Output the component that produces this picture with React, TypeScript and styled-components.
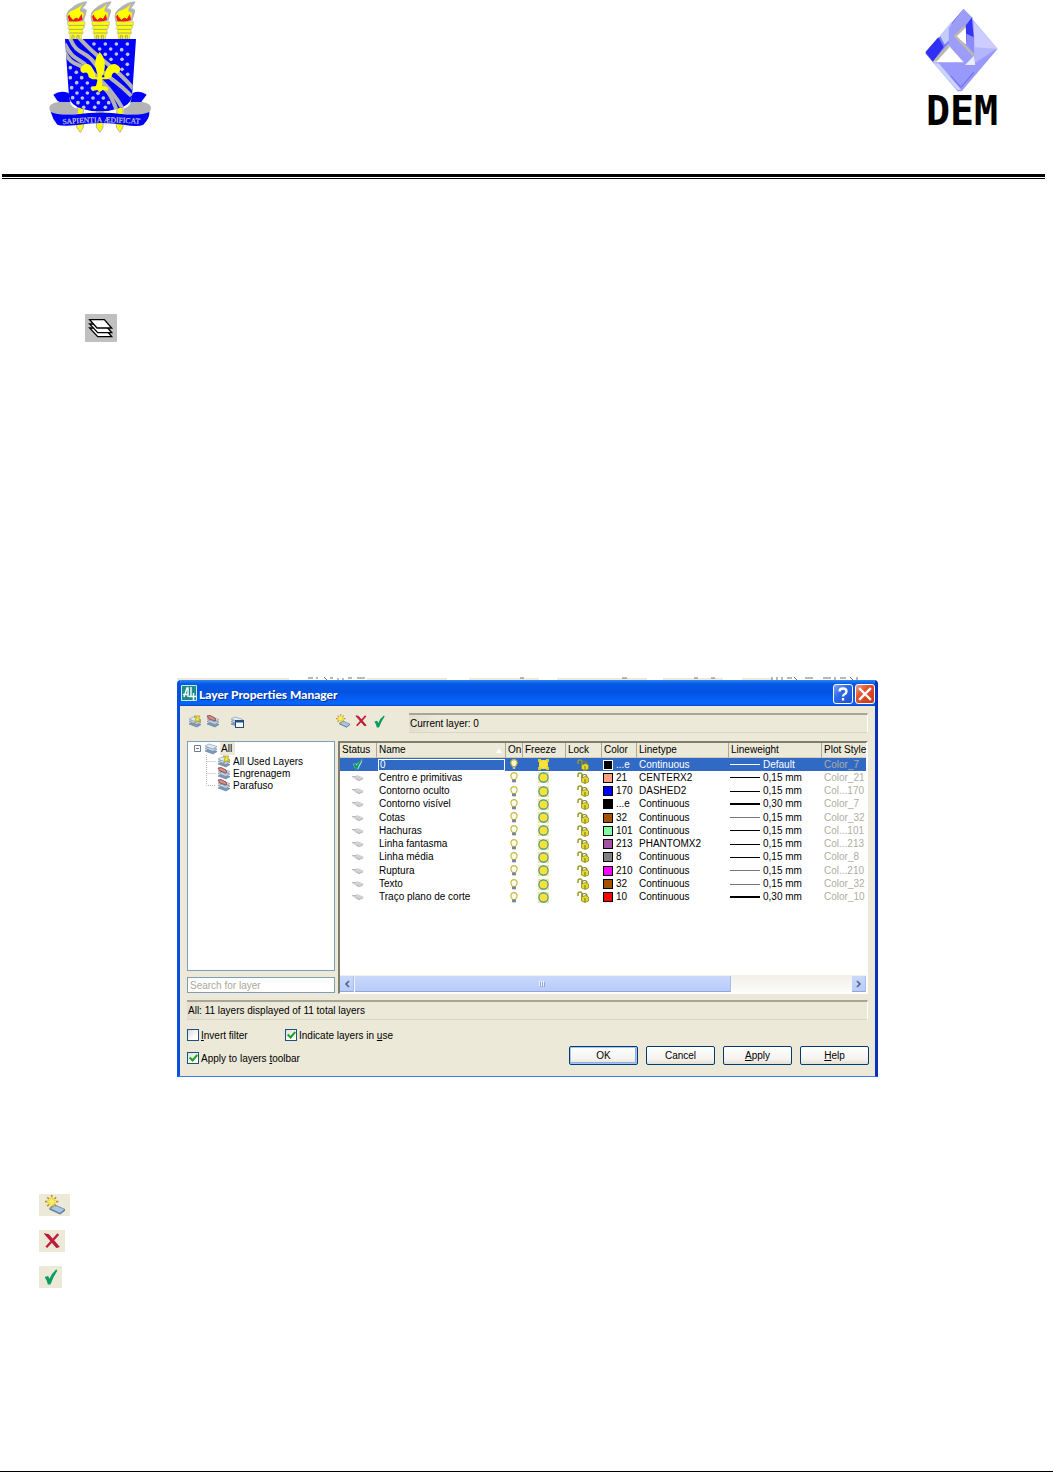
import React from "react";
import styled, { createGlobalStyle, css } from "styled-components";

const face = "#ece9d8";
const sans = '"Liberation Sans", Arial, sans-serif';

const Global = createGlobalStyle`
  *, *::before, *::after { box-sizing: border-box; }
  body { margin: 0; background: #fff; font-family: ${sans}; font-size: 10px; color: #000; }
  button, input { font-family: inherit; font-size: inherit; color: inherit; margin: 0; }
  svg { display: block; flex: none; }
`;

/* ---------- page ---------- */
const Page = styled.div`
  min-height: 100vh;
  display: flex;
  flex-direction: column;
`;
const Header = styled.header`
  height: 174px;
  padding: 0 54px 0 48px;
  display: flex;
  justify-content: space-between;
  align-items: flex-start;
`;
const Rule = styled.hr`
  width: auto;
  height: 5px;
  margin: 0 8px 0 2px;
  border: 0;
  border-top: 3px solid #000;
  border-bottom: 1px solid #000;
`;
const Department = styled.div`
  padding-top: 8px;
  display: flex;
  flex-direction: column;
  align-items: center;
`;
const DepartmentName = styled.div`
  font: bold 40px/38px "DejaVu Sans Mono", monospace;
`;
const ToolFigure = styled.div`
  margin: 135px 0 0 85px;
  width: 32px;
  height: 28px;
  background: #c0c0c0;
`;
const Figure = styled.div`
  margin: 335px auto 0;
  padding-left: 2px;
  width: 703px;
  max-width: 100%;
`;
const Legend = styled.ul`
  list-style: none;
  margin: 117px 0 0 39px;
  padding: 0;
  display: flex;
  flex-direction: column;
  gap: 14px;
  align-items: flex-start;
`;
const LegendItem = styled.li<{ $w: number }>`
  width: ${(p) => p.$w}px;
  height: 22px;
  background: ${face};
  display: flex;
  align-items: center;
  justify-content: center;
`;
const Footer = styled.footer`
  margin-top: auto;
  border-top: 1px solid #000;
`;

/* ---------- dialog ---------- */
const Dialog = styled.section`
  background: ${face};
  border: 3px solid #0a50e0;
  border-right-color: #0831c0;
  border-top: 0;
  border-bottom: 1px solid #3f7be0;
  border-radius: 4px 4px 0 0;
  overflow: hidden;
`;
const TitleBar = styled.div`
  height: 26px;
  margin: 0 -3px;
  padding: 0 3px 0 4px;
  display: flex;
  align-items: center;
  gap: 2px;
  background: linear-gradient(#2a86f5 0, #0458e6 4px, #0353e0 12px, #0562fb 21px, #0465fb 24px, #0345c8 26px);
`;
const Title = styled.h1`
  flex: 1;
  margin: 0;
  padding-top: 3px;
  font: 900 12px/16px Lato, "Open Sans", sans-serif;
  color: #fff;
  text-shadow: 1px 1px 0 #0a2f8c;
`;
const CaptionButton = styled.button<{ $close?: boolean }>`
  width: 20px;
  height: 20px;
  padding: 0;
  margin-top: 2px;
  border: 1px solid #fff;
  border-radius: 3px;
  background: ${(p) =>
    p.$close
      ? "linear-gradient(135deg, #f0a080, #e2512c 40%, #c63a14)"
      : "linear-gradient(135deg, #7ea6f5, #2f6ae8 40%, #1c50cf)"};
`;
const Toolbar = styled.div`
  padding: 7px 7px 8px;
  display: flex;
`;
const ToolGroup = styled.div<{ $w: number }>`
  width: ${(p) => p.$w}px;
  height: 16px;
  display: flex;
  gap: 2px;
`;
const ToolButton = styled.button<{ $gap?: boolean }>`
  width: 16px;
  height: 16px;
  padding: 0;
  border: 0;
  background: none;
  display: flex;
  align-items: center;
  justify-content: center;
  ${(p) => p.$gap && css`margin-left: 6px;`}
`;
const well = css`
  height: 20px;
  border: 0 solid #c9c6b6;
  border-top: 2px solid #a8a594;
  border-right: 1px solid #fff;
  border-bottom: 1px solid #d8d5c5;
  background: linear-gradient(90deg, #e2dfd0, ${face} 30px);
  padding-left: 1px;
  line-height: 18px;
  white-space: nowrap;
`;
const CurrentLayer = styled.div`
  flex: 1;
  ${well}
`;
const StatusBar = styled.div`
  ${well}
  margin: 6px 7px 0;
`;
const Panes = styled.div`
  padding: 0 7px;
  height: 253px;
  display: flex;
  gap: 3px;
`;
const Side = styled.div`
  width: 148px;
  display: flex;
  flex-direction: column;
  gap: 6px;
  padding-bottom: 1px;
`;
const Tree = styled.ul`
  flex: 1;
  margin: 0;
  padding: 0 0 0 6px;
  list-style: none;
  background: #fff;
  border: 1px solid #7f9db9;
`;
const TreeItem = styled.li<{ $child?: boolean }>`
  height: ${(p) => (p.$child ? 12 : 13)}px;
  display: flex;
  align-items: center;
  gap: ${(p) => (p.$child ? 1 : 2)}px;
  line-height: 13px;
  padding-left: ${(p) => (p.$child ? 4 : 0)}px;
`;
const TreeLabel = styled.span<{ $selected?: boolean }>`
  padding: 0 1px;
  ${(p) => p.$selected && css`background: ${face}; height: 13px; padding-right: 3px;`}
`;
const Search = styled.input`
  height: 16px;
  width: 100%;
  padding: 0 2px;
  border: 1px solid #7f9db9;
  background: #fff;
  &::placeholder { color: #aca899; opacity: 1; }
`;
const Grid = styled.div`
  flex: 1;
  min-width: 0;
  display: flex;
  flex-direction: column;
  justify-content: space-between;
  background: #fff;
  border: 2px solid #fff;
  border-left-color: #807d70;
  border-top-color: #807d70;
  border-bottom-width: 1px;
`;
const Table = styled.table`
  width: 100%;
  height: 161px;
  table-layout: fixed;
  border-collapse: separate;
  border-spacing: 0;
`;
const Th = styled.th`
  height: 15px;
  padding: 0 0 0 2px;
  font-weight: normal;
  text-align: left;
  line-height: 14px;
  white-space: nowrap;
  background: ${face};
  border-right: 1px solid #aca899;
  border-bottom: 1px solid #d0cdbd;
  &:last-child { border-right: 0; }
`;
const SortHeading = styled.div`
  display: flex;
  align-items: center;
  justify-content: space-between;
  padding-right: 3px;
`;
const Row = styled.tr<{ $selected?: boolean }>`
  ${(p) => p.$selected && css`background: #316ac5; color: #fff;`}
`;
const Td = styled.td<{ $muted?: boolean; $graphic?: boolean }>`
  padding: 0 0 0 ${(p) => (p.$graphic ? 1 : 2)}px;
  line-height: 12px;
  white-space: nowrap;
  ${(p) => p.$muted && css`color: #b0ac9f;`}
`;
const Cell = styled.div<{ $center?: boolean }>`
  display: flex;
  align-items: center;
  gap: 3px;
  justify-content: ${(p) => (p.$center ? "center" : "flex-start")};
  padding-right: ${(p) => (p.$center ? 3 : 0)}px;
`;
const NameInput = styled.input`
  display: block;
  width: 127px;
  height: 12px;
  margin-left: -1px;
  padding: 0 1px;
  border: 1px solid #fff;
  background: #316ac5;
`;
const Swatch = styled.span<{ $color: string; $light?: boolean }>`
  flex: none;
  width: 10px;
  height: 10px;
  border: 1px solid ${(p) => (p.$light ? "#fff" : "#000")};
  background: ${(p) => p.$color};
`;
const Weight = styled.span<{ $h: number; $color: string }>`
  width: 30px;
  height: ${(p) => p.$h}px;
  background: ${(p) => p.$color};
`;
const ScrollBar = styled.div`
  height: 18px;
  padding: 1px 0;
  display: flex;
  gap: 1px;
  background: linear-gradient(#f0efe8, #fdfdfb);
`;
const ScrollPart = styled.button<{ $thumb?: boolean }>`
  width: ${(p) => (p.$thumb ? "376px" : "14px")};
  height: 16px;
  padding: 0;
  border: 0;
  border-bottom: 1px solid #8fa8dc;
  border-right: 1px solid #a9bdec;
  background: linear-gradient(#c9d8fc, #b9cbf8);
  display: flex;
  align-items: center;
  justify-content: center;
  &:last-child { margin-left: auto; }
`;
const Controls = styled.div`
  padding: 9px 6px 11px 7px;
  display: flex;
  justify-content: space-between;
  align-items: flex-end;
`;
const Checks = styled.div`
  display: grid;
  grid-template-columns: 98px auto;
  gap: 11px 0;
  padding-bottom: 1px;
`;
const CheckLabel = styled.label<{ $wide?: boolean }>`
  height: 12px;
  display: flex;
  align-items: center;
  gap: 2px;
  white-space: nowrap;
  ${(p) => p.$wide && css`grid-column: 1 / -1;`}
`;
const CheckBox = styled.input`
  appearance: none;
  width: 12px;
  height: 12px;
  border: 1px solid #1c5180;
  background: linear-gradient(135deg, #dcdcd7, #fff 70%);
  display: grid;
  place-items: center;
  &:checked::after {
    content: "";
    width: 5px;
    height: 8px;
    margin-top: -2px;
    border: solid #21a121;
    border-width: 0 2px 2px 0;
    transform: rotate(42deg);
  }
`;
const Actions = styled.div`
  display: flex;
  gap: 8px;
`;
const Action = styled.button<{ $primary?: boolean }>`
  width: 69px;
  height: 19px;
  padding: 0;
  border: 1px solid #003c74;
  border-radius: 2px;
  background: linear-gradient(#fff, #f4f3ee 70%, #e3e0d5);
  ${(p) => p.$primary && css`box-shadow: inset 0 0 0 1px #a9c4f0, inset -1px -1px 0 1px #8fb0ea;`}
`;

/* ---------- drawings ---------- */
const Sheets = ({ badge }: { badge?: "pin" | "hand" | "window" }) => (
  <svg width="14" height="13" viewBox="0 0 14 13">
    <path d="M1 9l4-2 8 2.500-4 2.500z" fill="#7f9bbb" stroke="#5d7797" strokeWidth=".6" />
    <path d="M1 6.500l4-2 8 2.500-4 2.500z" fill="#c3d5e6" stroke="#607d9c" strokeWidth=".6" />
    <path d="M1 4l4-2 8 2.500-4 2.500z" fill="#e2ecf4" stroke="#7790ab" strokeWidth=".6" />
    {badge === "pin" && <path d="M6 1h6l-1 1.500v2l2 1.500h-4l-3 3 2-4-1-.5 2-2z" fill="#ffe838" stroke="#a79410" strokeWidth=".7" />}
    {badge === "hand" && <path d="M1 1l3-.5 5 2.500 1 2.500-2 .5-2-1-3-1z" fill="#d98d84" stroke="#7d3b41" strokeWidth=".8" />}
    {badge === "window" && (
      <>
        <rect x="5.500" y="5.500" width="8" height="7" fill="#fff" stroke="#254d84" />
        <path d="M5.500 6.500h8" stroke="#254d84" strokeWidth="2" />
      </>
    )}
  </svg>
);
const NewLayer = ({ size = 14 }: { size?: number }) => (
  <svg width={size} height={size} viewBox="0 0 18 18">
    <path d="M4 12l5-3 9 4-4.500 3.500z" fill="#a9c3e3" stroke="#6b88aa" strokeWidth=".8" />
    <path d="M4 12.500l9.500 4.500 4.500-3.500" fill="none" stroke="#58779b" />
    <path d="M6 0v12M0 6h12M2 2l8 8M10 2l-8 8" stroke="#b5961c" strokeWidth="1.500" />
    <path d="M6 2v8M2 6h8M3.500 3.500l5 5M8.500 3.500l-5 5" stroke="#fff05a" strokeWidth="1.300" />
  </svg>
);
const Cross = ({ size = 12 }: { size?: number }) => (
  <svg width={size} height={size} viewBox="0 0 14 14">
    <path d="M1 1l3 .5L13 12l-2 .5z" fill="#c41c3c" stroke="#b3173a" />
    <path d="M12.500 1L2 12.500" stroke="#c41c3c" strokeWidth="2" />
  </svg>
);
const Tick = ({ size = 12, light }: { size?: number; light?: boolean }) => (
  <svg width={size} height={size} viewBox="0 0 14 14">
    {light && <path d="M1 6h5l7-6v3l-5 10H4z" fill="#b8d6e0" />}
    <path d="M1.500 7l3-.8 1.200 2.300Q8 3 11.800.5l.7 1Q8.800 7 6.500 13.500H4.200Q3.500 10 1.500 7z" fill="#0b9c62" />
  </svg>
);
const StatusLayer = () => (
  <svg width="12" height="6" viewBox="0 0 12 6">
    <path d="M0 2h3l2-2 5 2 2 1-5 3-4-2z" fill="#d2d2d2" />
    <path d="M0 1.500h4M4 4l3 1.500L11 4" stroke="#aaa" strokeWidth=".8" fill="none" />
  </svg>
);
const Bulb = ({ filled }: { filled?: boolean }) => (
  <svg width="8" height="11" viewBox="0 0 8 11">
    <path d="M2.500 7.500Q.8 5 .8 3.500 1.500.6 4 .6T7.200 3.500Q7.200 5 5.500 7.500z" fill={filled ? "#fffbd0" : "#fffef0"} stroke="#c9b93c" strokeWidth="1.100" />
    <path d="M2.500 8h3v2h-3z" fill={filled ? "#e8edf8" : "#8a93ac"} stroke="#4d5f8c" strokeWidth=".6" />
  </svg>
);
const Sun = ({ square }: { square?: boolean }) => (
  <svg width="11" height="11" viewBox="0 0 11 11">
    <path d="M0 0h11v11H0z" fill={square ? "#d9c92c" : "#efe9a0"} />
    <circle cx="5.500" cy="5.500" r="4.600" fill="#f8e238" stroke={square ? "#eadb30" : "#3f8e96"} strokeWidth="1.100" />
    {square && <path d="M3 0h5M3 11h5M0 3v5M11 3v5" stroke="#316ac5" strokeWidth="2" />}
  </svg>
);
const Lock = () => (
  <svg width="12" height="12" viewBox="0 0 12 12">
    <path d="M1 5V3q0-2 2-2t2 2v3" fill="none" stroke="#9b9a25" strokeWidth="1.500" />
    <path d="M5 6V5q0-2.500 2.500-2.500T10 5" fill="none" stroke="#85832c" strokeWidth="1.200" />
    <path d="M4.500 6l4-1.500 3 1.500v4l-3.500 1.500L4.500 10z" fill="#e3da30" stroke="#89851c" strokeWidth=".8" />
    <path d="M8 7v4" stroke="#79751c" />
  </svg>
);
const ToolSheets = () => (
  <svg width="32" height="28" viewBox="0 0 96 84">
    <g fill="#fff" stroke="#000" strokeWidth="4">
      <path d="M14 42h44l22 26H38z" />
      <path d="M14 30h44l22 26H38z" />
      <path d="M14 17h44l22 25H36z" />
    </g>
  </svg>
);
const AppLogo = () => (
  <svg width="16" height="16" viewBox="0 0 16 16">
    <rect width="16" height="16" fill="#1f8c8c" />
    <path d="M.5 15.500V.5h15v15z" fill="none" stroke="#cdecec" />
    <path d="M3 12l3-9h1v9M2 9.500h5M10 2v9M8 11.500h7M12.500 8v7" fill="none" stroke="#fff" strokeWidth="1.400" />
  </svg>
);
const Gem = () => (
  <svg width="74" height="84" viewBox="74 22 218 248">
    <path d="M188 24L288 143 182 268H170L75 156z" fill="#9999fb" />
    <path d="M188 24L75 156l22 24L148 118l-6-28z" fill="#7a7af8" />
    <path d="M75 152l38-44 16 29-32 44z" fill="#3030f4" />
    <path d="M152 62l-34 42 14 26 22-22z" fill="#c3cdfb" />
    <path d="M188 26l28 26-54 54 54 54-24 28-48-52 0-56z" fill="#9c9cf9" />
    <path d="M143 132L98 182h90z" fill="#fff" />
    <path d="M97 180l45-51 4 9-38 42z" fill="#bbb8ae" />
    <path d="M97 184l18 2 66 78h-12z" fill="#cbd4fb" />
    <path d="M195 72v58l-34-26z" fill="#fff" />
    <path d="M195 74l-32 31 54 56" fill="none" stroke="#bdb8af" strokeWidth="7" />
    <path d="M194 74l18-24 6 62-22 10z" fill="#3434f5" />
    <path d="M196 98l22 10v46l-22-26z" fill="#8c8cf8" />
    <path d="M217 60l71 83-68 6z" fill="#ccccfe" />
    <path d="M219 138l66 4-66 44z" fill="#b3b6fc" />
    <path d="M192 190l26-27 4 27z" fill="#e9eefb" />
    <path d="M150 222l30 34 38-44" stroke="#6d6df2" strokeWidth="3" fill="none" />
  </svg>
);

const dots = [
  [192, 132], [226, 132], [259, 132], [292, 132], [209, 147], [242, 147], [275, 149], [226, 163], [259, 162], [293, 163],
  [243, 178], [276, 178], [292, 193], [276, 208], [293, 223], [121, 203], [139, 217], [121, 233], [155, 233], [140, 248],
  [172, 249], [125, 263], [156, 264], [187, 264], [141, 279], [172, 279], [204, 280], [128, 293], [157, 294], [189, 294], [220, 294],
  [144, 308], [173, 308], [205, 308], [236, 308], [161, 322], [194, 322], [226, 322],
];
const Crest = () => (
  <svg width="104" height="134" viewBox="54 0 312 402">
    <defs>
      <clipPath id="shield"><path d="M105 117H318L306 290Q300 316 266 325 212 344 156 326 122 316 117 290z" /></clipPath>
      <path id="motto" d="M98 373Q212 361 345 373" />
    </defs>
    {[0, 73, 145].map((x) => (
      <g key={x} transform={`translate(${x} 0)`}>
        <path d="M110 61Q104 36 124 24 142 7 171 4 172 10 158 25 174 27 169 38L162 62 113 66z" fill="#b3b3b3" />
        <path d="M115 59Q108 44 122 34 146 26 160 10 141 37 158 37 164 42 157 57L150 66H120z" fill="#ff0" />
        <path d="M113 50Q119 38 120 50l8 8 10-8 7 7 10-15 3 18-20 7-20-2z" fill="#f01818" />
        <path d="M121 44l8 10 3-12 8 9 9-10-2 14-10-2-8 7z" fill="#ff0" />
        <path d="M113 65H165V75L160 81H164L157 90 160 98 154 106V118H120V105L116 99 119 91 113 85 118 79 113 75z" fill="#ff0" stroke="#b8b8a0" strokeWidth="2" />
        <path d="M115 76H163M117 88H159M119 99H158M126 118v-11h6v11M141 118v-11h6v11" fill="none" stroke="#aaa77c" strokeWidth="3" />
      </g>
    ))}
    {[151, 210, 270].map((x) => (
      <path key={x} d={`M${x - 9} 320h18v61l-4 8-5 8-6-8-5-8z`} fill="#ff0" stroke="#b3b3b3" strokeWidth="3" />
    ))}
    <path d="M70 284Q90 270 116 279L121 310 90 307 82 302zM350 284Q330 270 308 279L301 310 334 306 338 300z" fill="#00f" />
    <path d="M58 322Q60 310 85 306H120Q123 322 145 327L142 341Q90 348 66 339 58 334 58 322zM363 322Q361 310 336 306H303Q298 321 281 326L280 341Q334 348 355 339 363 334 363 322z" fill="#b3b3b3" />
    <g clipPath="url(#shield)">
      <path d="M100 110H322V340H100z" fill="#00f" />
      <g fill="none" stroke="#b3b3b3" strokeWidth="12">
        <path d="M146 112C175 145 198 164 224 185S274 222 310 266" />
        <path d="M119 112C140 168 166 150 192 188S255 235 304 288" />
        <path d="M104 132C132 188 150 170 176 204S240 256 282 332" />
        <path d="M103 154C124 201 149 187 167 210M218 262C237 273 248 298 262 336" />
      </g>
      <g fill="#c2c2d8">{dots.map(([x, y]) => <circle key={`${x}-${y}`} cx={x} cy={y} r="5.500" />)}</g>
    </g>
    <path d="M209 156Q188 181 198 207L204 232H196Q194 208 180 195 164 185 151 206 150 216 160 219 175 213 176 232L187 238H203L198 258 186 260Q181 268 188 273L202 270 209 277 218 270 232 272Q238 265 230 260L218 258 215 238H232L244 232Q247 212 262 220 272 215 270 203 256 184 238 197 224 207 223 232H215Q237 187 209 156z" fill="#ff0" />
    <path d="M62 336Q80 346 142 343 212 332 280 343 340 346 358 336 360 355 340 374 325 382 280 374 212 363 142 375 96 380 82 374 68 358 62 336z" fill="#00f" />
    <text fontFamily="Liberation Serif, serif" fontSize="23" fill="#d0d0d0" stroke="#c8c8c8" strokeWidth=".6">
      <textPath href="#motto">SAPIENTIA ÆDIFICAT</textPath>
    </text>
  </svg>
);
/* sliver of the host application's toolbar, visible over the window */
const Sliver = () => (
  <svg width="701" height="3" viewBox="0 0 701 3">
    <path d="M0 1h112v2H0zM190 1h80v2h-80zM292 1h70v2h-70zM380 1h90v2h-90zM486 1h60v2h-60zM565 1h30v2h-30z" fill={face} />
    <path d="M131 1h5M139 1h2M147 0l3 3M153 1h3M161 1v2M166 1v2M171 1h4M180 1h8M343 1h4M445 1h5M517 1h4M534 1h4M595 0v3M600 0v3M605 0v3M610 1h5M617 0l3 3M628 1h8M646 1h8M658 0v3M663 1h6M673 0l3 3M680 0v3" stroke="#707078" fill="none" />
  </svg>
);

/* ---------- data ---------- */
type Layer = { name: string; color: string; num: string; type: string; weight: string; h: number; line?: string; plot: string };
const layers: Layer[] = [
  { name: "0", color: "#000", num: "...e", type: "Continuous", weight: "Default", h: 1, line: "#fff", plot: "Color_7" },
  { name: "Centro e primitivas", color: "#ff9f7f", num: "21", type: "CENTERX2", weight: "0,15 mm", h: 1, plot: "Color_21" },
  { name: "Contorno oculto", color: "#00f", num: "170", type: "DASHED2", weight: "0,15 mm", h: 1, plot: "Col...170" },
  { name: "Contorno visível", color: "#000", num: "...e", type: "Continuous", weight: "0,30 mm", h: 2, plot: "Color_7" },
  { name: "Cotas", color: "#a55200", num: "32", type: "Continuous", weight: "0,15 mm", h: 1, line: "#777", plot: "Color_32" },
  { name: "Hachuras", color: "#7fff9f", num: "101", type: "Continuous", weight: "0,15 mm", h: 1, plot: "Col...101" },
  { name: "Linha fantasma", color: "#a552a5", num: "213", type: "PHANTOMX2", weight: "0,15 mm", h: 1, plot: "Col...213" },
  { name: "Linha média", color: "#808080", num: "8", type: "Continuous", weight: "0,15 mm", h: 1, plot: "Color_8" },
  { name: "Ruptura", color: "#f0f", num: "210", type: "Continuous", weight: "0,15 mm", h: 1, line: "#777", plot: "Col...210" },
  { name: "Texto", color: "#a55200", num: "32", type: "Continuous", weight: "0,15 mm", h: 1, line: "#777", plot: "Color_32" },
  { name: "Traço plano de corte", color: "#f00", num: "10", type: "Continuous", weight: "0,30 mm", h: 2, plot: "Color_10" },
];
const columns: [string, number | undefined][] = [
  ["Status", 37], ["Name", 129], ["On", 17], ["Freeze", 43], ["Lock", 36], ["Color", 35], ["Linetype", 92], ["Lineweight", 93], ["Plot Style", undefined],
];

const LayerRow = ({ layer, selected }: { layer: Layer; selected: boolean }) => (
  <Row $selected={selected}>
    <Td $graphic><Cell $center>{selected ? <Tick size={11} light /> : <StatusLayer />}</Cell></Td>
    <Td>{selected ? <NameInput aria-label="Layer name" defaultValue={layer.name} /> : layer.name}</Td>
    <Td $graphic><Cell $center><Bulb filled={selected} /></Cell></Td>
    <Td $graphic><Cell $center><Sun square={selected} /></Cell></Td>
    <Td $graphic><Cell $center><Lock /></Cell></Td>
    <Td $graphic><Cell><Swatch $color={layer.color} $light={selected} />{layer.num}</Cell></Td>
    <Td>{layer.type}</Td>
    <Td $graphic><Cell><Weight $h={layer.h} $color={layer.line ?? "#000"} />{layer.weight}</Cell></Td>
    <Td $muted>{layer.plot}</Td>
  </Row>
);

const LayerManager = () => (
  <Dialog aria-labelledby="dialog-title">
    <TitleBar>
      <AppLogo />
      <Title id="dialog-title">Layer Properties Manager</Title>
      <CaptionButton aria-label="Help">
        <svg width="18" height="18" viewBox="0 0 18 18"><path d="M5.500 6.500Q5.500 3.500 9 3.500T12.500 6.500Q12.500 8.300 10.500 9.200 9 10 9 11.500M9 13v2.500" fill="none" stroke="#fff" strokeWidth="2.300" /></svg>
      </CaptionButton>
      <CaptionButton $close aria-label="Close">
        <svg width="18" height="18" viewBox="0 0 18 18"><path d="M4 4l10 10M14 4L4 14" stroke="#fff" strokeWidth="2.400" strokeLinecap="square" /></svg>
      </CaptionButton>
    </TitleBar>
    <Toolbar>
      <ToolGroup $w={148}>
        <ToolButton aria-label="New property filter"><Sheets badge="pin" /></ToolButton>
        <ToolButton aria-label="New group filter"><Sheets badge="hand" /></ToolButton>
        <ToolButton $gap aria-label="Layer states manager"><Sheets badge="window" /></ToolButton>
      </ToolGroup>
      <ToolGroup $w={74}>
        <ToolButton aria-label="New layer"><NewLayer /></ToolButton>
        <ToolButton aria-label="Delete layer"><Cross /></ToolButton>
        <ToolButton aria-label="Set current"><Tick size={13} /></ToolButton>
      </ToolGroup>
      <CurrentLayer>Current layer: 0</CurrentLayer>
    </Toolbar>
    <Panes>
      <Side>
        <Tree>
          <TreeItem>
            <svg width="8" height="8" viewBox="0 0 8 8"><path d="M.5.5h6v6h-6zM2 3.500h3" fill="none" stroke="#6f7d92" /></svg>
            <Sheets /><TreeLabel $selected>All</TreeLabel>
          </TreeItem>
          {([["All Used Layers", "pin"], ["Engrenagem", "hand"], ["Parafuso", "hand"]] as const).map(([label, badge]) => (
            <TreeItem $child key={label}>
              <svg width="18" height="12" viewBox="0 0 18 12"><path d={label === "Parafuso" ? "M8.500 0v6.500H18" : "M8.500 0v12M8.500 6.500H18"} fill="none" stroke="#b5b5b5" strokeDasharray="1 1" /></svg>
              <Sheets badge={badge} /><TreeLabel>{label}</TreeLabel>
            </TreeItem>
          ))}
        </Tree>
        <Search placeholder="Search for layer" aria-label="Search for layer" />
      </Side>
      <Grid>
        <Table>
          <colgroup>{columns.map(([name, w]) => <col key={name} width={w} />)}</colgroup>
          <thead>
            <tr>
              {columns.map(([name]) => (
                <Th key={name} scope="col">
                  {name === "Name" ? (
                    <SortHeading>Name<svg width="6" height="5" viewBox="0 0 6 5"><path d="M0 5l3-5 3 5z" fill="#fff" /></svg></SortHeading>
                  ) : name}
                </Th>
              ))}
            </tr>
          </thead>
          <tbody>{layers.map((layer, i) => <LayerRow key={layer.name} layer={layer} selected={i === 0} />)}</tbody>
        </Table>
        <ScrollBar>
          <ScrollPart aria-label="Scroll left"><svg width="6" height="8" viewBox="0 0 6 8"><path d="M5 1L2 4l3 3" fill="none" stroke="#4d6185" strokeWidth="1.600" /></svg></ScrollPart>
          <ScrollPart $thumb aria-label="Scroll position"><svg width="7" height="6" viewBox="0 0 7 6"><path d="M.5 0v5M2.500 0v5M4.500 0v5" stroke="#eef4fe" /><path d="M1.500 1v5M3.500 1v5M5.500 1v5" stroke="#8ca7e6" /></svg></ScrollPart>
          <ScrollPart aria-label="Scroll right"><svg width="6" height="8" viewBox="0 0 6 8"><path d="M1 1l3 3-3 3" fill="none" stroke="#4d6185" strokeWidth="1.600" /></svg></ScrollPart>
        </ScrollBar>
      </Grid>
    </Panes>
    <StatusBar>All: 11 layers displayed of 11 total layers</StatusBar>
    <Controls>
      <Checks>
        <CheckLabel><CheckBox type="checkbox" /><span><u>I</u>nvert filter</span></CheckLabel>
        <CheckLabel><CheckBox type="checkbox" defaultChecked /><span>Indicate layers in <u>u</u>se</span></CheckLabel>
        <CheckLabel $wide><CheckBox type="checkbox" defaultChecked /><span>Apply to layers <u>t</u>oolbar</span></CheckLabel>
      </Checks>
      <Actions>
        <Action $primary>OK</Action>
        <Action>Cancel</Action>
        <Action><u>A</u>pply</Action>
        <Action><u>H</u>elp</Action>
      </Actions>
    </Controls>
  </Dialog>
);

export default function App() {
  return (
    <Page>
      <Global />
      <Header>
        <Crest />
        <Department>
          <Gem />
          <DepartmentName>DEM</DepartmentName>
        </Department>
      </Header>
      <Rule />
      <ToolFigure><ToolSheets /></ToolFigure>
      <Figure>
        <Sliver />
        <LayerManager />
      </Figure>
      <Legend>
        <LegendItem $w={31}><NewLayer size={20} /></LegendItem>
        <LegendItem $w={26}><Cross size={16} /></LegendItem>
        <LegendItem $w={23}><Tick size={16} /></LegendItem>
      </Legend>
      <Footer />
    </Page>
  );
}
